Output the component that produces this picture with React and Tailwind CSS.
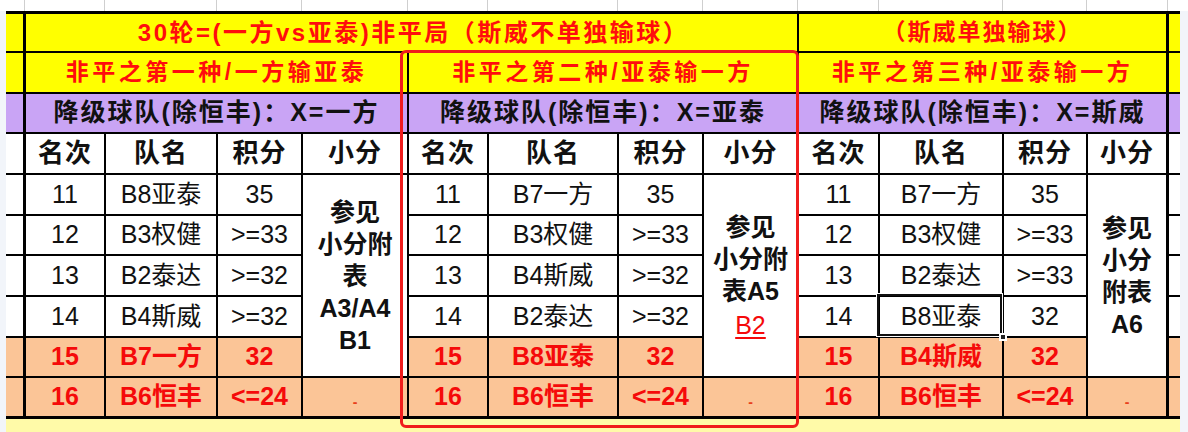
import React from "react";

const GRID =
  "grid grid-cols-[20px_80px_112px_85px_106px_80px_130px_85px_95px_81px_124px_84px_81px_11px]";

const sections = [
  {
    title: "非平之第一种/一方输亚泰",
    x: "X=一方",
    rows: [
      ["11", "B8亚泰", "35"],
      ["12", "B3权健", ">=33"],
      ["13", "B2泰达", ">=32"],
      ["14", "B4斯威", ">=32"],
      ["15", "B7一方", "32"],
      ["16", "B6恒丰", "<=24"],
    ],
    note: ["参见", "小分附", "表", "A3/A4", "B1"],
  },
  {
    title: "非平之第二种/亚泰输一方",
    x: "X=亚泰",
    rows: [
      ["11", "B7一方", "35"],
      ["12", "B3权健", ">=33"],
      ["13", "B4斯威", ">=32"],
      ["14", "B2泰达", ">=32"],
      ["15", "B8亚泰", "32"],
      ["16", "B6恒丰", "<=24"],
    ],
    note: ["参见", "小分附", "表A5", "B2"],
  },
  {
    title: "非平之第三种/亚泰输一方",
    x: "X=斯威",
    rows: [
      ["11", "B7一方", "35"],
      ["12", "B3权健", ">=33"],
      ["13", "B2泰达", ">=33"],
      ["14", "B8亚泰", "32"],
      ["15", "B4斯威", "32"],
      ["16", "B6恒丰", "<=24"],
    ],
    note: ["参见", "小分", "附表", "A6"],
  },
];

const YEL = "bg-[#ffff00]";
const PUR = "bg-[#c9a4f5]";
const ORG = "bg-[#fbc597]";
const WHT = "bg-white";

function Cell({ className = "", children }) {
  return (
    <div className={"flex items-center justify-center border-black " + className}>
      {children}
    </div>
  );
}

function SelectionBox() {
  return (
    <div className="pointer-events-none absolute -left-[4px] -top-[4px] -right-[1px] -bottom-[1px] border border-white">
      <div className="absolute inset-0 border-2 border-[#111]" />
      <div className="absolute -bottom-[5px] -right-[5px] h-[8px] w-[8px] border-2 border-white bg-[#222]" />
    </div>
  );
}

export default function App() {
  const rowBg = (i) => (i >= 4 ? ORG : WHT);

  const cells = [];
  // Row 1
  cells.push(<Cell key="r1a" className={`${YEL} border-r-[3px] border-b-2`} />);
  cells.push(
    <Cell
      key="r1b"
      className={`${YEL} col-span-8 border-r-2 border-b-2 text-[24px] font-bold tracking-[2.5px] text-[#ff0d0d]`}
    >
      <span className="pl-[4px]">30轮=(一方vs亚泰)非平局（斯威不单独输球）</span>
    </Cell>
  );
  cells.push(
    <Cell
      key="r1c"
      className={`${YEL} col-span-4 border-r-[3px] border-b-2 text-[23px] font-bold tracking-[2px] text-[#ff0d0d]`}
    >
      （斯威单独输球）
    </Cell>
  );
  cells.push(<Cell key="r1z" className={`${YEL} border-b-2`} />);

  // Row 2
  cells.push(<Cell key="r2a" className={`${YEL} border-r-[3px] border-b-2`} />);
  sections.forEach((s, si) =>
    cells.push(
      <Cell
        key={"r2" + si}
        className={`${YEL} col-span-4 ${si === 2 ? "border-r-[3px]" : "border-r-2"} border-b-2 text-[23px] font-bold tracking-[3.5px] text-[#ff0d0d]`}
      >
        {s.title}
      </Cell>
    )
  );
  cells.push(<Cell key="r2z" className={`${YEL} border-b-2`} />);

  // Row 3
  cells.push(<Cell key="r3a" className={`${PUR} border-r-[3px] border-b-2`} />);
  sections.forEach((s, si) =>
    cells.push(
      <Cell
        key={"r3" + si}
        className={`${PUR} col-span-4 ${si === 2 ? "border-r-[3px]" : "border-r-2"} border-b-2 text-[25px] font-bold tracking-[2px] text-[#111]`}
      >
        降级球队(除恒丰)：{s.x}
      </Cell>
    )
  );
  cells.push(<Cell key="r3z" className={`${PUR} border-b-2`} />);

  // Row 4 headers
  cells.push(<Cell key="r4a" className={`${WHT} border-r-[3px] border-b-2`} />);
  sections.forEach((s, si) => {
    ["名次", "队名", "积分", "小分"].forEach((h, hi) =>
      cells.push(
        <Cell
          key={"r4" + si + hi}
          className={`${WHT} ${si === 2 && hi === 3 ? "border-r-[3px]" : "border-r-2"} border-b-2 text-[26px] font-bold tracking-[1px] text-[#111]`}
        >
          {h}
        </Cell>
      )
    );
  });
  cells.push(<Cell key="r4z" className={`${WHT} border-b-2`} />);

  // Data rows
  for (let r = 0; r < 6; r++) {
    const last = r === 5;
    const red = r >= 4;
    const bb = last ? "" : "border-b-2";
    const txt = red
      ? "text-[25px] font-bold text-[#f50a0a]"
      : "text-[25px] font-normal text-[#111]";
    cells.push(
      <Cell key={"d" + r + "a"} className={`${rowBg(r)} border-r-[3px] ${bb}`} />
    );
    sections.forEach((s, si) => {
      const row = s.rows[r];
      row.forEach((v, ci) => {
        const sel = si === 2 && r === 3 && ci === 1;
        cells.push(
          <Cell
            key={"d" + r + si + ci}
            className={`${rowBg(r)} ${sel ? "relative" : ""} border-r-2 ${bb} ${txt}`}
          >
            <span>{v}</span>
            {sel && <SelectionBox />}
          </Cell>
        );
      });
      const br = si === 2 ? "border-r-[3px]" : "border-r-2";
      if (r === 0) {
        cells.push(
          <Cell
            key={"note" + si}
            className={`${WHT} row-span-5 ${br} border-b-2 text-[25px] font-bold leading-[32px] text-[#111]`}
          >
            <div className="flex flex-col items-center">
              {s.note.map((n, ni) =>
                si === 1 && ni === 3 ? (
                  <span
                    key={ni}
                    className="mt-[2px] font-normal text-[#f50a0a] underline decoration-[2px] underline-offset-[3px]"
                  >
                    {n}
                  </span>
                ) : (
                  <span key={ni}>{n}</span>
                )
              )}
            </div>
          </Cell>
        );
      }
      if (last) {
        cells.push(
          <Cell key={"dash" + si} className={`${ORG} ${br} text-[14px] font-bold text-[#e8401a]`}>
            <span className="mt-[10px]">-</span>
          </Cell>
        );
      }
    });
    cells.push(<Cell key={"d" + r + "z"} className={`${rowBg(r)} ${bb}`} />);
  }

  const topCols = [20, 80, 112, 85, 106, 80, 130, 85, 95, 81, 124, 84, 81, 11];

  return (
    <div
      className="relative h-[432px] w-[1188px] overflow-hidden bg-[#f2f5fa]"
      style={{ fontFamily: '"Liberation Sans", "Noto Sans CJK SC", sans-serif' }}
    >
      {/* top gridline strip */}
      <div className="flex h-[11px] bg-white">
        <div className="w-[5px]" />
        {topCols.map((w, i) => (
          <div
            key={i}
            className={i < 13 ? "h-full border-r border-[#cfcfcf]" : "h-full"}
            style={{ width: w }}
          />
        ))}
      </div>

      <div className="ml-[6px] flex flex-col">
        <div
          className={`${GRID} w-[1174px] grid-rows-[39px_41px_40px_41px_41px_40px_41px_41px_40px_38px] border-y-[3px] border-black`}
        >
          {cells}
        </div>
        <div className="h-[13px] w-[1174px] bg-[#fffaa8]" />
      </div>

      {/* red highlight frame */}
      <div className="pointer-events-none absolute left-[400px] top-[50px] h-[378px] w-[399px] rounded-[6px] border-[3px] border-[#f01c1c]" />
    </div>
  );
}
